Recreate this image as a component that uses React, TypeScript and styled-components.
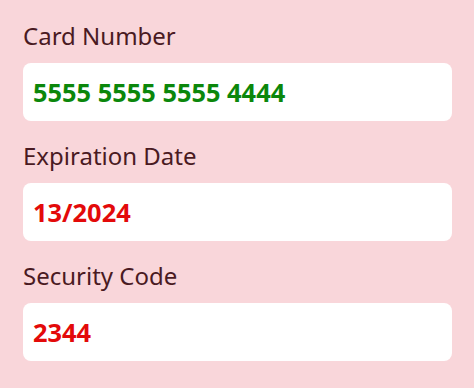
import styled, { createGlobalStyle } from "styled-components";

const GlobalStyle = createGlobalStyle`
   html, body {
      margin: 0;
      padding: 0;
      background-color: #f9d6da;
   }
   body {
      font-family: "Noto Sans", "Open Sans", sans-serif;
   }
`

const Form = styled.div`
   width: 474px;
   height: 388px;
   box-sizing: border-box;
   padding: 19px 22px 0 23px;
   display: flex;
   flex-direction: column;
   gap: 18px;
`

const Field = styled.div`
   display: flex;
   flex-direction: column;
   gap: 10px;
`

const Label = styled.div`
   font-size: 24px;
   line-height: 34px;
   color: #4a1a22;
`

const ValueBox = styled.div`
   height: 58px;
   background-color: #ffffff;
   border-radius: 8px;
   display: flex;
   align-items: center;
   padding: 0 10px;
`

const Value = styled.span<{ valid: boolean }>`
   font-size: 25.4px;
   font-weight: 700;
   color: ${({ valid }) => (valid ? "#0b870b" : "#e30a0a")};
`

const fields = [
   { label: "Card Number", value: "5555 5555 5555 4444", valid: true },
   { label: "Expiration Date", value: "13/2024", valid: false },
   { label: "Security Code", value: "2344", valid: false },
]

export default function App() {
   return (
      <>
         <GlobalStyle />
         <Form>
            {fields.map(f => (
               <Field key={f.label}>
                  <Label>{f.label}</Label>
                  <ValueBox>
                     <Value valid={f.valid}>{f.value}</Value>
                  </ValueBox>
               </Field>
            ))}
         </Form>
      </>
   );
}
